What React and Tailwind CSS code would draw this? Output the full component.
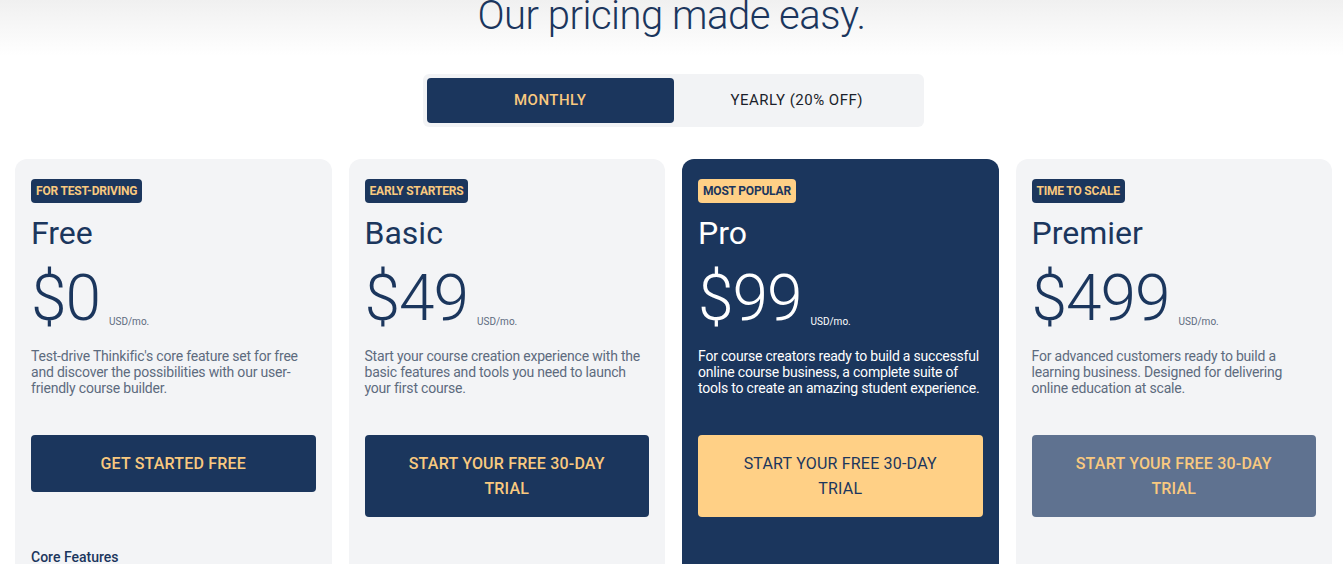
import React, { useState } from 'react';
import clsx from 'clsx';

const plans = [
  {
    badge: 'For test-driving',
    name: 'Free',
    price: '$0',
    desc: "Test-drive Thinkific's core feature set for free and discover the possibilities with our user-friendly course builder.",
    cta: 'Get started free',
    variant: 'light',
    button: 'navy',
  },
  {
    badge: 'Early starters',
    name: 'Basic',
    price: '$49',
    desc: 'Start your course creation experience with the basic features and tools you need to launch your first course.',
    cta: 'Start your free 30-day trial',
    variant: 'light',
    button: 'navy',
  },
  {
    badge: 'Most popular',
    name: 'Pro',
    price: '$99',
    desc: 'For course creators ready to build a successful online course business, a complete suite of tools to create an amazing student experience.',
    cta: 'Start your free 30-day trial',
    variant: 'dark',
    button: 'gold',
  },
  {
    badge: 'Time to scale',
    name: 'Premier',
    price: '$499',
    desc: 'For advanced customers ready to build a learning business. Designed for delivering online education at scale.',
    cta: 'Start your free 30-day trial',
    variant: 'light',
    button: 'slate',
  },
];

const PlanCard = ({ plan }) => {
  const dark = plan.variant === 'dark';
  return (
    <div
      className={clsx(
        'rounded-xl px-4 pt-[19px] pb-10',
        dark ? 'bg-[#1b365d]' : 'bg-[#f3f4f6]'
      )}
    >
      <span
        className={clsx(
          'inline-block h-6 rounded px-[5px] text-[12px] font-bold uppercase leading-6 tracking-[-0.2px]',
          dark ? 'bg-[#ffd086] text-[#1b365d]' : 'bg-[#1b365d] text-[#f9c97f]'
        )}
      >
        {plan.badge}
      </span>

      <h3
        className={clsx(
          'mt-[10px] text-[32px] font-normal leading-10',
          dark ? 'text-white' : 'text-[#1b365d]'
        )}
      >
        {plan.name}
      </h3>

      <div className="mt-[14px] flex items-end">
        <span
          className={clsx(
            'text-[64px] font-light leading-[64px] tracking-[-1px]',
            dark ? 'text-white' : 'text-[#1b365d]'
          )}
        >
          {plan.price}
        </span>
        <span
          className={clsx(
            'mb-[2px] ml-[9px] text-[10px]',
            dark ? 'text-white' : 'text-[#5d6b7e]'
          )}
        >
          USD/mo.
        </span>
      </div>

      <p
        className={clsx(
          'mt-[17px] text-[14px] leading-4 tracking-[-0.2px]',
          dark ? 'text-white' : 'text-[#5d6b7e]'
        )}
      >
        {plan.desc}
      </p>

      <button
        className={clsx(
          'mt-[39px] w-full rounded px-[42px] py-4 text-[16px] font-medium uppercase leading-[25px] tracking-[0.2px]',
          plan.button === 'navy' && 'bg-[#1b365d] text-[#f9c97f]',
          plan.button === 'gold' && 'bg-[#ffd086] font-normal text-[#1b365d]',
          plan.button === 'slate' && 'bg-[#5f7290] text-[#f9c97f]'
        )}
      >
        {plan.cta}
      </button>

      <p className={clsx('mt-[55px] text-[14px] font-medium', dark ? 'text-white' : 'text-[#1b365d]')}>
        Core Features
      </p>
    </div>
  );
};

export default function App() {
  const [period, setPeriod] = useState('monthly');

  return (
    <div className="min-h-screen overflow-hidden bg-white font-['Roboto',sans-serif] text-[#1b365d]">
      <div className="bg-gradient-to-b from-[#efefef] to-white pb-5">
        <h1 className="mt-[-4px] text-center text-[40px] font-light leading-10 tracking-[-0.5px]">
          Our pricing made easy.
        </h1>
      </div>

      <div className="mt-[18px] flex justify-center">
        <div className="ml-[4px] flex w-[501px] rounded-md bg-[#f2f3f5] p-1">
          {[
            ['monthly', 'Monthly'],
            ['yearly', 'Yearly (20% off)'],
          ].map(([key, label]) => (
            <button
              key={key}
              onClick={() => setPeriod(key)}
              className={clsx(
                'h-[45px] flex-1 rounded text-[15px] uppercase tracking-[0.5px]',
                period === key ? 'bg-[#1b365d] font-medium text-[#f9c97f]' : 'font-normal text-[#1b1f2b]'
              )}
            >
              {label}
            </button>
          ))}
        </div>
      </div>

      <div className="ml-[15px] mt-8 grid w-[1317px] grid-cols-4 gap-[17px]">
        {plans.map((plan) => (
          <PlanCard key={plan.name} plan={plan} />
        ))}
      </div>
    </div>
  );
}
